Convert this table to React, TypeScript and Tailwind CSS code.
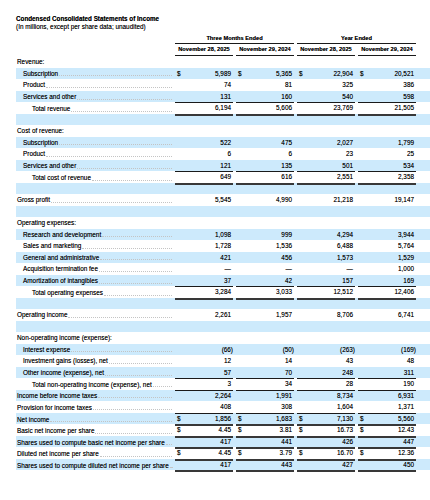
import React from "react";

type Line = "single" | "thick" | "double";

type Row = {
  label?: string;
  level?: 0 | 1 | 2;
  vals?: string[];
  dollar?: boolean;
  line?: Line;
};

const rows: Row[] = [
  { label: "Revenue:" },
  { label: "Subscription", level: 1, vals: ["5,989", "5,365", "22,904", "20,521"], dollar: true },
  { label: "Product", level: 1, vals: ["74", "81", "325", "386"] },
  { label: "Services and other", level: 1, vals: ["131", "160", "540", "598"], line: "single" },
  { label: "Total revenue", level: 2, vals: ["6,194", "5,606", "23,769", "21,505"], line: "thick" },
  {},
  { label: "Cost of revenue:" },
  { label: "Subscription", level: 1, vals: ["522", "475", "2,027", "1,799"] },
  { label: "Product", level: 1, vals: ["6", "6", "23", "25"] },
  { label: "Services and other", level: 1, vals: ["121", "135", "501", "534"], line: "single" },
  { label: "Total cost of revenue", level: 2, vals: ["649", "616", "2,551", "2,358"], line: "thick" },
  {},
  { label: "Gross profit", level: 0, vals: ["5,545", "4,990", "21,218", "19,147"] },
  {},
  { label: "Operating expenses:" },
  { label: "Research and development", level: 1, vals: ["1,098", "999", "4,294", "3,944"] },
  { label: "Sales and marketing", level: 1, vals: ["1,728", "1,536", "6,488", "5,764"] },
  { label: "General and administrative", level: 1, vals: ["421", "456", "1,573", "1,529"] },
  { label: "Acquisition termination fee", level: 1, vals: ["—", "—", "—", "1,000"] },
  { label: "Amortization of intangibles", level: 1, vals: ["37", "42", "157", "169"], line: "single" },
  { label: "Total operating expenses", level: 2, vals: ["3,284", "3,033", "12,512", "12,406"], line: "thick" },
  {},
  { label: "Operating income", level: 0, vals: ["2,261", "1,957", "8,706", "6,741"] },
  {},
  { label: "Non-operating income (expense):" },
  { label: "Interest expense", level: 1, vals: ["(66)", "(50)", "(263)", "(169)"] },
  { label: "Investment gains (losses), net", level: 1, vals: ["12", "14", "43", "48"] },
  { label: "Other income (expense), net", level: 1, vals: ["57", "70", "248", "311"], line: "single" },
  { label: "Total non-operating income (expense), net", level: 2, vals: ["3", "34", "28", "190"], line: "single" },
  { label: "Income before income taxes", level: 0, vals: ["2,264", "1,991", "8,734", "6,931"] },
  { label: "Provision for income taxes", level: 0, vals: ["408", "308", "1,604", "1,371"], line: "single" },
  { label: "Net income", level: 0, vals: ["1,856", "1,683", "7,130", "5,560"], dollar: true, line: "double" },
  { label: "Basic net income per share", level: 0, vals: ["4.45", "3.81", "16.73", "12.43"], dollar: true, line: "double" },
  { label: "Shares used to compute basic net income per share", level: 0, vals: ["417", "441", "426", "447"], line: "double" },
  { label: "Diluted net income per share", level: 0, vals: ["4.45", "3.79", "16.70", "12.36"], dollar: true, line: "double" },
  { label: "Shares used to compute diluted net income per share", level: 0, vals: ["417", "443", "427", "450"], line: "double" },
];

const lineClass: Record<Line, string> = {
  single: "border-b border-[#1a1a1a]",
  thick: "border-b-2 border-[#383838]",
  double: "border-b-2 border-[#383838]",
};

const indent = ["pl-[1px]", "pl-[7px]", "pl-[16px]"];

const grid = "grid grid-cols-[156px_repeat(4,61px)]";

const StatementRow: React.FC<{ row: Row; shaded: boolean }> = ({ row, shaded }) => {
  const hasVals = !!row.vals;
  return (
    <div className={`${grid} h-[11.5px] leading-[11.5px] ${shaded ? "bg-[#cdeafc]" : "bg-white"}`}>
      <div className={`flex items-center min-w-0 ${hasVals ? indent[row.level ?? 0] : "pl-[1px]"}`}>
        {row.label && <span className="whitespace-nowrap">{row.label}</span>}
        {hasVals && (
          <span className="flex-1 ml-[1px] mt-[5px] border-b border-dotted border-[#c4c4c4]" />
        )}
      </div>
      {row.vals?.map((v, i) => (
        <div key={i} className="h-full ml-[3px]">
          <div
            className={`h-full flex items-center justify-between pl-[2px] ${
              v.endsWith(")") ? "pr-0" : "pr-[2px]"
            } ${row.line ? lineClass[row.line] : ""}`}
          >
            <span>{row.dollar ? "$" : ""}</span>
            <span>{v}</span>
          </div>
        </div>
      ))}
    </div>
  );
};

export default function App() {
  return (
    <div className="w-[430px] h-[500px] bg-white text-black font-['Liberation_Sans',Arial,sans-serif] pl-[16px] pt-[15px] [text-shadow:0_0_0.4px_rgba(0,0,0,0.55)]">
      <div className="font-bold text-[6.3px] leading-[8px]">Condensed Consolidated Statements of Income</div>
      <div className="text-[6.4px] leading-[7px]">(In millions, except per share data; unaudited)</div>

      <div className={`${grid} h-[14px] items-end font-bold text-[5.7px]`}>
        <div />
        <div className="col-span-2 ml-[3px] border-b border-[#1a1a1a] text-center leading-[9px]">Three Months Ended</div>
        <div className="col-span-2 ml-[3px] border-b border-[#1a1a1a] text-center leading-[9px]">Year Ended</div>
      </div>
      <div className={`${grid} h-[12px] font-bold text-[5.7px]`}>
        <div />
        {["November 28, 2025", "November 29, 2024", "November 28, 2025", "November 29, 2024"].map((d, i) => (
          <div key={i} className="ml-[3px] border-b border-[#1a1a1a] text-center leading-[11px]">
            {d}
          </div>
        ))}
      </div>

      <div className="text-[6.4px]">
        {rows.map((r, i) => (
          <StatementRow key={i} row={r} shaded={i % 2 === 1} />
        ))}
      </div>
    </div>
  );
}
